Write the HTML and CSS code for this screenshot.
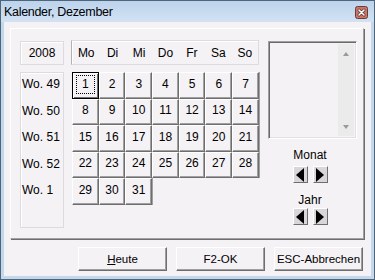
FILE: index.html
```html
<!DOCTYPE html>
<html lang="de">
<head>
    <meta charset="UTF-8">
    <title>Kalender, Dezember</title>
    <link rel="stylesheet" href="styles.css">
</head>
<body>

<div class="window">
    <div class="titlebar">
        <span class="title">Kalender, Dezember</span>
        <span class="close">
            <svg width="13" height="13" viewBox="0 0 13 13">
                <rect x="0.5" y="0.5" width="12" height="12" rx="2" fill="#c9766a" stroke="#6e3a36"/>
                <path d="M4 4 L9 9 M9 4 L4 9" stroke="#5a2a26" stroke-width="3" stroke-linecap="round"/>
                <path d="M4 4 L9 9 M9 4 L4 9" stroke="#fff" stroke-width="1.6" stroke-linecap="round"/>
            </svg>
        </span>
    </div>

    <div class="client">
        <div class="group">
            <div class="weeks-col">
                <div class="year">2008</div>
                <div class="weeks">
                    <div class="wk">Wo. 49</div>
                    <div class="wk">Wo. 50</div>
                    <div class="wk">Wo. 51</div>
                    <div class="wk">Wo. 52</div>
                    <div class="wk">Wo. 1</div>
                </div>
            </div>

            <div class="month">
                <div class="dayhead">
                    <span>Mo</span><span>Di</span><span>Mi</span><span>Do</span><span>Fr</span><span>Sa</span><span>So</span>
                </div>
                <div class="days" id="days"></div>
            </div>

            <div class="side">
                <div class="listbox">
                    <div class="scroll">
                        <span class="tri up"></span>
                        <span class="tri down"></span>
                    </div>
                </div>
                <div class="nav nav-month">
                    <div class="navlabel">Monat</div>
                    <div class="arrows">
                        <button class="arrow"><span class="tri-l"></span></button>
                        <button class="arrow"><span class="tri-r"></span></button>
                    </div>
                </div>
                <div class="nav nav-year">
                    <div class="navlabel">Jahr</div>
                    <div class="arrows">
                        <button class="arrow"><span class="tri-l"></span></button>
                        <button class="arrow"><span class="tri-r"></span></button>
                    </div>
                </div>
            </div>
        </div>

        <div class="actions">
            <button class="btn"><u>H</u>eute</button>
            <button class="btn">F2-OK</button>
            <button class="btn">ESC-Abbrechen</button>
        </div>
    </div>
</div>

<script>
// Tage im Dezember 2008
const days = document.getElementById("days");
for (let d = 1; d <= 31; d++) {
    const b = document.createElement("button");
    b.className = d === 1 ? "day today" : "day";
    b.innerHTML = d === 1 ? '<span class="focus">1</span>' : d;
    days.appendChild(b);
}
</script>

</body>
</html>
```

FILE: styles.css
```css
* {
    box-sizing: border-box;
}
body {
    margin: 0;
    font-family: 'Liberation Sans', Arial, sans-serif;
    font-size: 12px;
    color: #000;
    background: #fff;
}
button {
    font-family: 'Liberation Sans', Arial, sans-serif;
    font-size: 12px;
    color: #000;
    padding: 0;
    margin: 0;
}
.window {
    width: 375px;
    height: 280px;
    border: 1px solid #4f6678;
    background: #c4d8ed;
    padding: 0 3px 3px 3px;
    display: flex;
    flex-direction: column;
}
.titlebar {
    height: 21px;
    flex-shrink: 0;
    display: flex;
    align-items: center;
    justify-content: space-between;
    background: linear-gradient(#bcd3ec, #d2e2f3);
    margin: 0 -3px;
    padding: 1px 3px 0 3px;
}
.title {
    font-size: 12.5px;
    letter-spacing: -0.3px;
}
.close {
    display: flex;
    margin-right: 3px;
}
.client {
    flex: 1;
    background: #f5f2f5;
    display: flex;
    flex-direction: column;
    padding: 6px 7px 0 6px;
}
.group {
    height: 211px;
    flex-shrink: 0;
    border: 1px solid;
    border-color: #fff #a0a0a0 #a0a0a0 #fff;
    box-shadow: 1px 1px 0 #6e6e6e;
    display: flex;
    padding: 11px 0 0 9px;
}
.weeks-col {
    width: 44px;
    display: flex;
    flex-direction: column;
    gap: 7px;
    margin-top: 1px;
}
.year {
    height: 24px;
    border: 1px solid #dedbde;
    box-shadow: inset 1px 1px 0 #fff;
    display: flex;
    align-items: center;
    justify-content: center;
}
.weeks {
    height: 156px;
    border: 1px solid #dedbde;
    box-shadow: inset 1px 1px 0 #fff;
}
.wk {
    height: 26.5px;
    line-height: 22px;
    padding-left: 1px;
}
.month {
    width: 188px;
    margin-left: 7px;
    display: flex;
    flex-direction: column;
    gap: 7px;
}
.dayhead {
    height: 25px;
    border: 1px solid #dedbde;
    border-left-color: #b4b0b4;
    box-shadow: inset 1px 1px 0 #fff;
    display: grid;
    grid-template-columns: repeat(7, 1fr);
    align-items: center;
    text-align: center;
    padding-left: 1px;
}
.days {
    display: grid;
    grid-template-columns: repeat(7, 26.7px);
    grid-auto-rows: 26.5px;
    margin-left: 1px;
}
.day {
    background: #f5f2f5;
    border: 1px solid;
    border-color: #fff #6e6e6e #6e6e6e #fff;
    box-shadow: inset -1px -1px 0 #a0a0a0, 1px 0 0 #a0a0a0;
    display: flex;
    align-items: center;
    justify-content: center;
    padding-bottom: 3px;
}
.today {
    border-color: #000;
    box-shadow: inset 1px 1px 0 #fff, inset -1px -1px 0 #6e6e6e;
}
.focus {
    display: block;
    width: 19px;
    height: 19px;
    line-height: 17px;
    border: 1px dotted #000;
    margin-top: 2px;
}
.side {
    width: 89px;
    margin-left: 9px;
    display: flex;
    flex-direction: column;
    align-items: center;
}
.listbox {
    width: 89px;
    height: 98px;
    margin-top: 1px;
    border: 1px solid;
    border-color: #a0a0a0 #fff #fff #a0a0a0;
    box-shadow: inset 1px 1px 0 #696969, inset -1px -1px 0 #e3e0e3;
    display: flex;
    justify-content: flex-end;
    padding: 2px 2px 2px 0;
    background: #f5f2f5;
}
.scroll {
    width: 16px;
    background: #ecebec;
    display: flex;
    flex-direction: column;
    justify-content: space-between;
    align-items: center;
    padding: 8px 0 7px;
}
.tri {
    width: 0;
    height: 0;
    border-left: 3.5px solid transparent;
    border-right: 3.5px solid transparent;
}
.tri.up {
    border-bottom: 4px solid #9a9a9a;
}
.tri.down {
    border-top: 4px solid #9a9a9a;
}
.nav {
    display: flex;
    flex-direction: column;
    align-items: center;
    margin-left: -5px;
}
.nav-month {
    margin-top: 9px;
}
.nav-year {
    margin-top: 10px;
}
.navlabel {
    line-height: 14px;
    margin-bottom: 4px;
}
.nav-year .navlabel {
    margin-bottom: 1px;
}
.arrows {
    display: flex;
    gap: 5px;
}
.arrow {
    width: 15px;
    height: 17px;
    background: #d8d6d8;
    border: 1px solid;
    border-color: #fff #6e6e6e #6e6e6e #fff;
    display: flex;
    align-items: center;
    justify-content: center;
}
.tri-l, .tri-r {
    width: 0;
    height: 0;
    border-top: 7px solid transparent;
    border-bottom: 7px solid transparent;
}
.tri-l {
    border-right: 8px solid #000;
}
.tri-r {
    border-left: 8px solid #000;
}
.actions {
    display: flex;
    justify-content: flex-end;
    gap: 9px;
    margin-top: 8px;
    padding-right: 1px;
}
.btn {
    width: 89px;
    height: 24px;
    font-size: 11.5px;
    background: #f5f2f5;
    border: 1px solid;
    border-color: #fff #6e6e6e #6e6e6e #fff;
    box-shadow: inset -1px -1px 0 #a0a0a0;
}
```
